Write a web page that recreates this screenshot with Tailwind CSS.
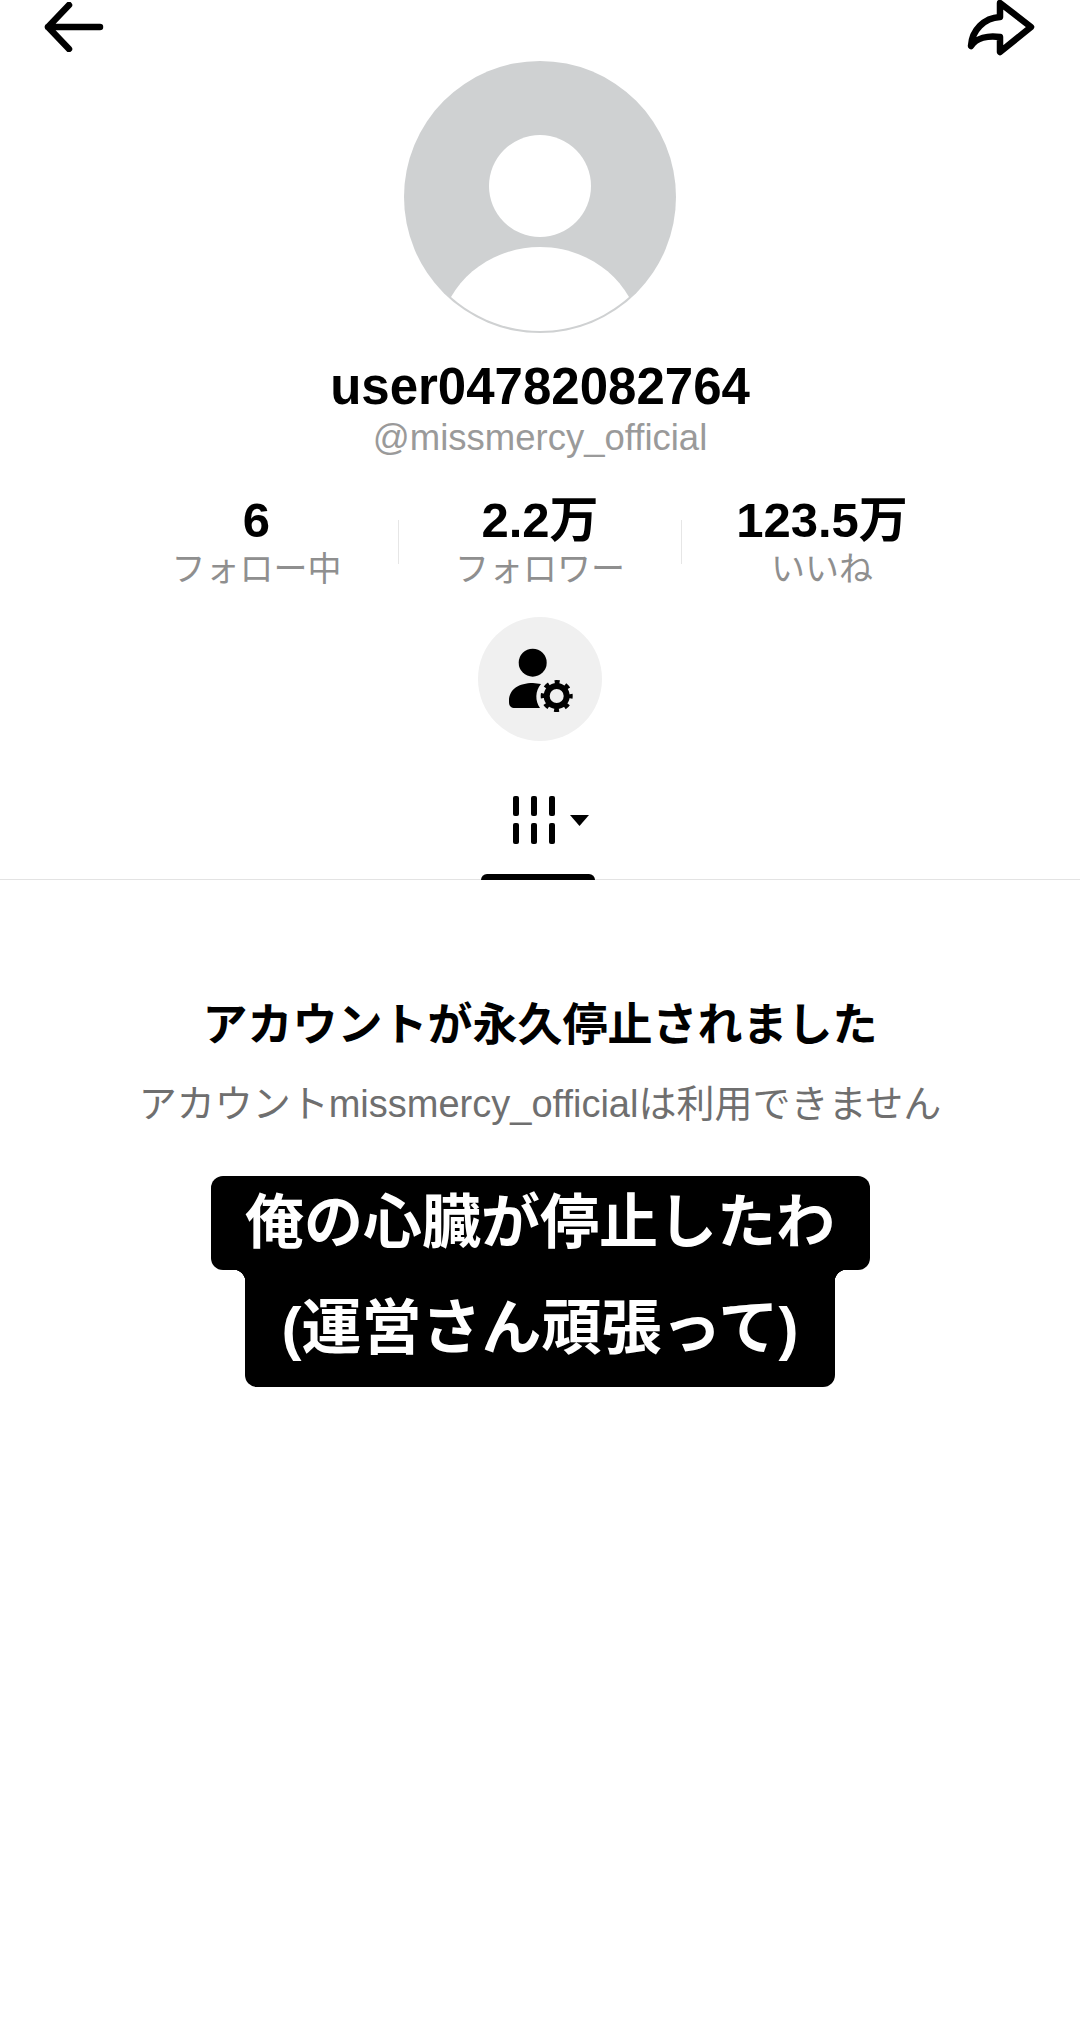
<!DOCTYPE html>
<html lang="ja">
  <head>
    <meta charset="UTF-8" />
    <meta name="viewport" content="width=device-width, initial-scale=1.0" />
    <title>user04782082764</title>
    <script src="https://cdn.jsdelivr.net/npm/@tailwindcss/browser@4"></script>
  </head>
  <body class="bg-white font-['Liberation_Sans','Noto_Sans_CJK_JP',sans-serif]">
    <div class="w-[1080px] h-[2032px] overflow-hidden flex flex-col items-center">
      <!-- top bar -->
      <div class="w-full h-[61px] px-[44px] flex justify-between items-start">
        <svg class="mt-[2px]" width="60" height="50" viewBox="0 0 60 50" fill="none" stroke="#000" stroke-width="6.500" stroke-linecap="round" stroke-linejoin="round">
          <path d="M25 3 L4 25 L25 47 M4 25 H56" />
        </svg>
        <svg width="70" height="56" viewBox="0 0 70 56" fill="none" stroke="#000" stroke-width="6.500" stroke-linejoin="round">
          <path d="M34 3 L65 27 L34 52 V37 C22 35 10 38 5 46 C6 30 18 18 34 17 Z" />
        </svg>
      </div>

      <!-- avatar -->
      <svg width="272" height="272" viewBox="0 0 272 272">
        <circle cx="136" cy="136" r="136" fill="#cfd1d2" />
        <circle cx="136" cy="125" r="51" fill="#fff" />
        <path d="M47 236 C64 206 98 186 136 186 C174 186 208 206 225 236 C200 258 169 270 136 270 C103 270 72 258 47 236 Z" fill="#fff" />
      </svg>

      <h1 class="mt-[24px] h-[60px] leading-[60px] text-[51px] font-bold text-black">user04782082764</h1>
      <p class="mt-[-1px] h-[44px] leading-[44px] text-[36.5px] text-[#9a9a9a]">@missmercy_official</p>

      <!-- stats -->
      <div class="mt-[33px] w-full flex justify-center items-center">
        <div class="w-[283px] ml-[1px] flex flex-col items-center">
          <span class="h-[54px] leading-[54px] text-[49px] font-bold text-black">6</span>
          <span class="h-[44px] leading-[44px] text-[34px] text-[#8f8f8f]">フォロー中</span>
        </div>
        <div class="w-[1px] h-[44px] bg-[#e6e6e6]"></div>
        <div class="w-[282px] flex flex-col items-center">
          <span class="h-[54px] leading-[54px] text-[49px] font-bold text-black">2.2万</span>
          <span class="h-[44px] leading-[44px] text-[34px] text-[#8f8f8f]">フォロワー</span>
        </div>
        <div class="w-[1px] h-[44px] bg-[#e6e6e6]"></div>
        <div class="w-[280px] mr-[4px] flex flex-col items-center">
          <span class="h-[54px] leading-[54px] text-[49px] font-bold text-black">123.5万</span>
          <span class="h-[44px] leading-[44px] text-[34px] text-[#8f8f8f]">いいね</span>
        </div>
      </div>

      <!-- manage button -->
      <div class="mt-[26px] w-[124px] h-[124px] rounded-full bg-[#f0f0f0] flex items-center justify-center">
        <svg width="66" height="66" viewBox="0 0 66 66" fill="#000">
          <circle cx="25.700" cy="16.700" r="14" />
          <path d="M2 55 C2 43 12 37 26 37 L34 38 C28 45 28 55 33 62 H8 C4 62 2 60 2 56 Z" />
          <circle cx="49.700" cy="50" r="10" fill="none" stroke="#000" stroke-width="6" />
          <circle cx="49.700" cy="50" r="14" fill="none" stroke="#000" stroke-width="4" stroke-dasharray="5 5.996" stroke-dashoffset="2.500" />
        </svg>
      </div>

      <!-- tab -->
      <div class="mt-[54px] w-full h-[85px] relative border-b border-[#e3e3e3] flex justify-center">
        <div class="ml-[23px] h-[72px] flex items-start">
          <svg class="mt-[1px]" width="78" height="52" viewBox="0 0 78 52" fill="#000">
            <rect x="0" y="0" width="6" height="20" rx="2" /><rect x="18" y="0" width="6" height="20" rx="2" /><rect x="36" y="0" width="6" height="20" rx="2" />
            <rect x="0" y="27" width="6" height="21" rx="2" /><rect x="18" y="27" width="6" height="21" rx="2" /><rect x="36" y="27" width="6" height="21" rx="2" />
            <path d="M57 19 H76 L66.500 30 Z" />
          </svg>
        </div>
        <div class="absolute bottom-[-1px] left-[481px] w-[114px] h-[6px] bg-black rounded-t-[6px]"></div>
      </div>

      <!-- banned message -->
      <h2 class="mt-[120px] h-[52px] leading-[52px] text-[45px] font-bold text-black whitespace-nowrap">アカウントが永久停止されました</h2>
      <p class="mt-[27px] h-[50px] leading-[50px] text-[38px] text-[#6f6f6f] whitespace-nowrap">アカウントmissmercy_officialは利用できません</p>

      <!-- caption -->
      <div class="mt-[47px] flex flex-col items-center font-bold text-white">
        <div class="w-[659px] h-[94px] bg-black rounded-[12px] flex items-center justify-center text-[59px] leading-none whitespace-nowrap">俺の心臓が停止したわ</div>
        <div class="relative w-[590px] h-[117px] bg-black rounded-b-[12px] flex items-center justify-center text-[60px] leading-none whitespace-nowrap">
          <div class="absolute top-0 left-[-12px] w-[12px] h-[12px] bg-[radial-gradient(circle_at_0_100%,transparent_12px,#000_12.500px)]"></div>
          <div class="absolute top-0 right-[-12px] w-[12px] h-[12px] bg-[radial-gradient(circle_at_100%_100%,transparent_12px,#000_12.500px)]"></div>
          (運営さん頑張って)
        </div>
      </div>
    </div>
  </body>
</html>
